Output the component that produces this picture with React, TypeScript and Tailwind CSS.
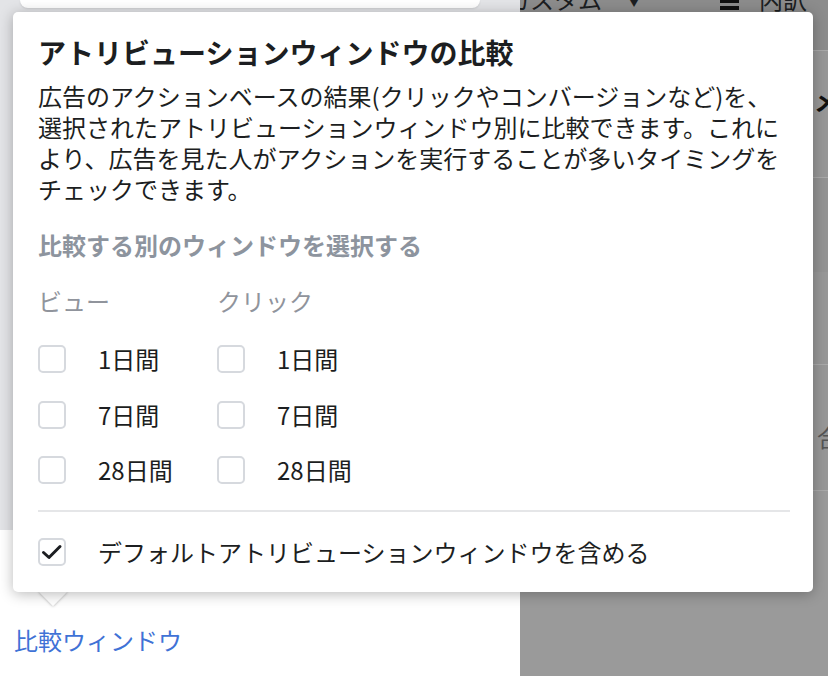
const font = { fontFamily: '"Noto Sans CJK JP", "Noto Sans", sans-serif' };

function Box({ checked = false }: { checked?: boolean }) {
  return (
    <span className="flex h-[28px] w-[28px] shrink-0 items-center justify-center rounded-[5px] border-2 border-[#d6d9de] bg-white">
      {checked && (
        <svg width="24" height="24" viewBox="0 0 24 24" fill="none">
          <polyline points="3.5,12.5 9,17.5 20,6.5" stroke="#1c1e21" strokeWidth="3" strokeLinecap="round" strokeLinejoin="round" />
        </svg>
      )}
    </span>
  );
}

function Option({ label }: { label: string }) {
  return (
    <label className="flex h-[28px] items-center gap-[32px] text-[24px] leading-[28px] text-[#1c1e21]">
      <Box />
      <span>{label}</span>
    </label>
  );
}

function Column({ title }: { title: string }) {
  return (
    <div className="flex w-[179px] flex-col">
      <p className="text-[24px] leading-[32px] text-[#90949c]">{title}</p>
      <div className="mt-[28px] flex flex-col gap-[27.5px]">
        <Option label="1日間" />
        <Option label="7日間" />
        <Option label="28日間" />
      </div>
    </div>
  );
}

function Popover() {
  return (
    <div className="absolute left-[13px] top-[12px] z-10 w-[800px]">
      {/* pointer */}
      <div className="absolute bottom-[-10px] left-[30px] h-[20px] w-[20px] rotate-45 bg-white shadow-[0_0_3px_rgba(0,0,0,0.35)]" />
      <div className="relative rounded-[5px] bg-white pb-[26px] pl-[25px] pr-[23px] pt-[24px] shadow-[0_2px_14px_rgba(0,0,0,0.28)]">
        <h2 className="text-[28px] font-bold leading-[32px] text-[#1c1e21]">アトリビューションウィンドウの比較</h2>
        <p className="mt-[12px] text-[24px] leading-[31px] text-[#1c1e21]">
          広告のアクションベースの結果(クリックやコンバージョンなど)を、
          <br />
          選択されたアトリビューションウィンドウ別に比較できます。これに
          <br />
          より、広告を見た人がアクションを実行することが多いタイミングを
          <br />
          チェックできます。
        </p>
        <p className="mt-[25px] text-[24px] font-bold leading-[32px] text-[#8d949e]">比較する別のウィンドウを選択する</p>
        <div className="mt-[24px] flex">
          <Column title="ビュー" />
          <Column title="クリック" />
        </div>
        <div className="mt-[26px] h-[2px] bg-[#e5e6e8]" />
        <label className="mt-[26px] flex h-[28px] items-center gap-[32px] text-[24px] leading-[28px] text-[#1c1e21]">
          <Box checked />
          <span>デフォルトアトリビューションウィンドウを含める</span>
        </label>
      </div>
    </div>
  );
}

export default function App() {
  return (
    <div className="relative flex h-[676px] w-[828px] overflow-hidden bg-white" style={font}>
      {/* left panel */}
      <div className="relative z-[1] flex w-[520px] shrink-0 flex-col">
        <div className="h-[530px] bg-[#e3e4e7]">
          <div className="ml-[20px] h-[8px] w-[460px] rounded-b-[8px] bg-white shadow-[0_1px_2px_rgba(0,0,0,0.1)]" />
        </div>
        <div className="flex-1 bg-white pl-[14px] pt-[94px]">
          <a className="text-[24px] leading-[32px] text-[#3f72d6]">比較ウィンドウ</a>
        </div>
      </div>

      {/* dimmed right side */}
      <div className="flex flex-1 flex-col bg-[#979797] shadow-[inset_12px_0_14px_-8px_rgba(0,0,0,0.25)]">
        <div className="flex h-[51px] items-start border-b border-[#a9a9a9] bg-[#8c8c8c]">
          <div className="-ml-[14px] -mt-[17px] flex items-center text-[24px] leading-[32px] text-[#1c1e21]">
            <span>カスタム</span>
            <span className="ml-[24px] text-[16px]">▼</span>
          </div>
          <div className="ml-[78px] flex flex-col gap-[3px]">
            <span className="h-[3px] w-[19px] bg-[#111]" />
            <span className="h-[4px] w-[19px] bg-[#111]" />
          </div>
          <span className="-mt-[17px] ml-[20px] text-[24px] leading-[32px] text-[#1c1e21]">内訳</span>
        </div>
        <div className="flex h-[127px] border-b border-[#a9a9a9] pl-[294px] pt-[34px]">
          <span className="text-[24px] font-bold leading-[32px] text-[#111]">メ</span>
        </div>
        <div className="h-[94px] bg-[#939393]" />
        <div className="h-[93px] border-b border-[#a9a9a9]" />
        <div className="flex h-[126px] border-b border-[#a9a9a9] pl-[297px] pt-[56px]">
          <span className="text-[24px] leading-[32px] text-[#555]">合</span>
        </div>
        <div className="flex-1 bg-[#9a9a9a]" />
      </div>

      <Popover />
    </div>
  );
}
